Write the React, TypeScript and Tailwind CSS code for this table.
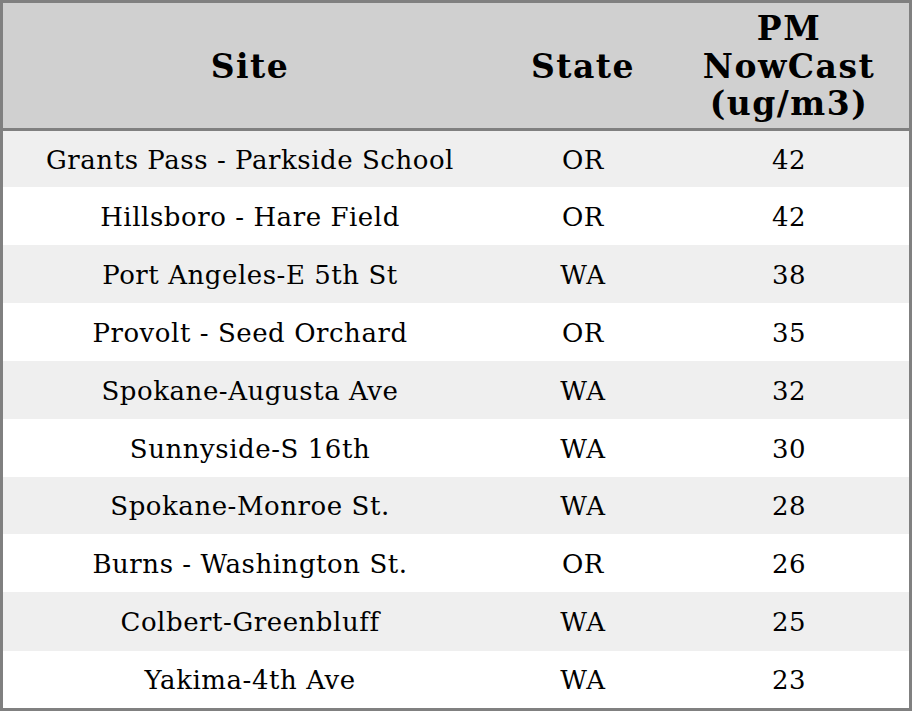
import React from "react";

const rows: [string, string, string, number][] = [
  ["Grants Pass - Parkside School", "OR", "42", 56],
  ["Hillsboro - Hare Field", "OR", "42", 58],
  ["Port Angeles-E 5th St", "WA", "38", 58],
  ["Provolt - Seed Orchard", "OR", "35", 58],
  ["Spokane-Augusta Ave", "WA", "32", 58],
  ["Sunnyside-S 16th", "WA", "30", 58],
  ["Spokane-Monroe St.", "WA", "28", 57],
  ["Burns - Washington St.", "OR", "26", 58],
  ["Colbert-Greenbluff", "WA", "25", 59],
  ["Yakima-4th Ave", "WA", "23", 57],
];

export default function App() {
  return (
    <div className="w-[912px] h-[711px] bg-white" style={{ fontFamily: '"DejaVu Serif", serif' }}>
      <div className="w-[912px] h-[711px] border-[3px] border-[#808080] flex flex-col text-black">
        <div className="h-[128px] bg-[#d0d0d0] border-b-[3px] border-[#808080] flex font-bold text-[33px] leading-[37.5px] tracking-[1.5px] shrink-0 pt-[2px]">
          <div className="w-[494px] flex items-center justify-center">Site</div>
          <div className="w-[172px] flex items-center justify-center">State</div>
          <div className="w-[240px] flex items-center justify-center text-center">
            PM
            <br />
            NowCast
            <br />
            (ug/m3)
          </div>
        </div>
        <div className="flex-1 flex flex-col text-[26px] tracking-[0.55px]">
          {rows.map((r, i) => (
            <div
              key={i}
              className={`flex items-center pt-[2px] shrink-0 ${i % 2 === 0 ? "bg-[#efefef]" : "bg-white"}`}
              style={{ height: r[3] }}
            >
              <div className="w-[494px] text-center">{r[0]}</div>
              <div className="w-[172px] text-center">{r[1]}</div>
              <div className="w-[240px] text-center">{r[2]}</div>
            </div>
          ))}
        </div>
      </div>
    </div>
  );
}
